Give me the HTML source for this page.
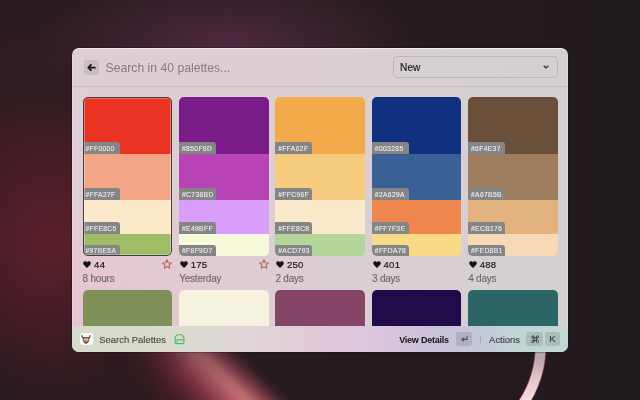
<!DOCTYPE html>
<html><head><meta charset="utf-8">
<style>
*{margin:0;padding:0;box-sizing:border-box}
html,body{width:640px;height:400px;overflow:hidden}
body{position:relative;font-family:"Liberation Sans",sans-serif;background:#201719;-webkit-font-smoothing:antialiased}
.abs{position:absolute}
.bg{position:absolute;left:0;top:0;width:640px;height:400px;
 background:
  radial-gradient(ellipse 195px 80px at 228px 46px, rgba(82,42,64,0.9), rgba(82,42,64,0) 100%),
  radial-gradient(ellipse 130px 150px at 50px 245px, rgba(96,30,44,0.95), rgba(96,30,44,0) 100%),
  radial-gradient(ellipse 220px 190px at 60px 170px, rgba(62,30,35,0.7), rgba(62,30,35,0) 100%),
  radial-gradient(ellipse 160px 80px at 110px 380px, rgba(50,26,30,0.6), rgba(50,26,30,0) 100%),
  linear-gradient(90deg,#281b1f 0%,#251b1e 50%,#211a1e 100%);}
.ray{position:absolute;left:133px;top:260px;width:150px;height:280px;transform:rotate(-46deg);transform-origin:50% 50%;
 background:linear-gradient(90deg, rgba(110,35,50,0) 22%, rgba(125,36,56,0.45) 38%, rgba(158,55,78,0.8) 50%, rgba(188,92,106,0.95) 60%, rgba(204,122,124,1) 68%, rgba(170,72,90,0.65) 77%, rgba(120,40,58,0) 87%);
 -webkit-mask-image:linear-gradient(180deg, rgba(0,0,0,0) 12%, rgba(0,0,0,0.7) 36%, rgba(0,0,0,1) 58%);
 filter:blur(5px)}
.win{will-change:transform;position:absolute;left:72px;top:48px;width:495.5px;height:304px;border-radius:7px;overflow:hidden;
 background:
  radial-gradient(ellipse 250px 180px at 0px 275px, rgba(236,194,208,0.8), rgba(236,194,208,0) 100%),
  linear-gradient(90deg,#ddcfd5 0%,#dccfd4 40%,#d8cfd3 70%,#d4d0d2 100%);
 box-shadow:0 0 0 0.6px rgba(20,10,14,0.6), inset 0 0 0 0.6px rgba(255,255,255,0.45), inset 0 1px 0 rgba(255,255,255,0.55)}
.back{left:12px;top:12px;width:15px;height:15px;border-radius:3px;background:rgba(165,163,165,0.38)}
.search{left:33.6px;top:12px;font-size:12.2px;color:#837b80;line-height:16px;white-space:nowrap}
.dd{left:321px;top:8.2px;width:164.5px;height:22.3px;border:1px solid rgba(120,110,115,0.28);border-radius:4.5px;background:rgba(212,208,210,0.35)}
.ddtext{left:6.1px;top:3.7px;font-size:10.2px;color:#1c1a1b;line-height:14px;-webkit-text-stroke:0.15px #1c1a1b}
.sep{left:0;top:38px;width:100%;height:1px;background:rgba(140,125,132,0.22)}
.card{position:absolute;top:49.25px;width:89.5px;height:159px;border-radius:5px;overflow:hidden}
.selb{position:absolute;left:0;top:0;width:100%;height:100%;border:1.8px solid #403e3f;border-radius:5px;box-shadow:inset 0 0 0 0.8px rgba(255,255,255,0.4)}
.band{position:absolute;left:0;width:100%}
.lab{position:absolute;left:0;bottom:0;width:37px;height:11.5px;background:#858586;border-top-right-radius:3px;
 font-family:"Liberation Sans",sans-serif;font-size:6.7px;color:#f0f0f0;line-height:11.5px;padding:0.6px 0 0 2.9px;letter-spacing:0.38px;white-space:nowrap;-webkit-text-stroke:0.1px #f0f0f0}
.meta{position:absolute;white-space:nowrap}
.cnt{top:210.8px;font-size:9.6px;color:#1a1819;line-height:12px;letter-spacing:0.25px;-webkit-text-stroke:0.2px #1a1819}
.time{top:225.2px;font-size:10px;color:#6a6468;line-height:12px;letter-spacing:-0.22px;-webkit-text-stroke:0.12px #6a6468}
.footer{left:0;top:278px;width:100%;height:26px;
 background:linear-gradient(90deg,#d6dccb 0%,#d8dbcb 15%,#dcdad0 24%,#e0d5d8 36%,#e2c9d8 50%,#dac6dc 62%,#cac2da 72%,#c6c6d9 80%,#c2d5d5 90%,#c0d8d3 100%)}
.kbd{position:absolute;border-radius:3px;background:rgba(100,112,118,0.25)}
</style></head><body>
<div class="bg"></div>
<div class="ray"></div>
<svg class="abs" style="left:0;top:0" width="640" height="400" viewBox="0 0 640 400">
 <defs><linearGradient id="arcg" gradientUnits="userSpaceOnUse" x1="0" y1="350" x2="0" y2="400">
  <stop offset="0" stop-color="#b0a0a6"/><stop offset="0.2" stop-color="#bea8ae"/><stop offset="0.55" stop-color="#dfc3c8"/><stop offset="1" stop-color="#f6dde0"/></linearGradient></defs>
 <path d="M540.6 340 A109 109 0 0 1 518.6 410" fill="none" stroke="#a8505c" stroke-width="11.2"/>
 <path d="M540.6 340 A109 109 0 0 1 518.6 410" fill="none" stroke="url(#arcg)" stroke-width="9.8"/>
</svg>
<div class="win">
  <div class="abs back"><svg width="15" height="15" viewBox="0 0 15 15"><path d="M4.4 7.6H11M6.9 5L4.3 7.6L6.9 10.2" stroke="#1b191a" stroke-width="1.85" fill="none" stroke-linecap="round" stroke-linejoin="round"/></svg></div>
  <div class="abs search">Search in 40 palettes...</div>
  <div class="abs dd"><div class="abs ddtext">New</div>
    <svg class="abs" style="left:149.3px;top:8.2px" width="6" height="4" viewBox="0 0 6 4"><path d="M1 1L3 3L5 1" stroke="#262425" stroke-width="1.1" fill="none" stroke-linecap="round" stroke-linejoin="round"/></svg>
  </div>
  <div class="abs sep"></div>
<div class="card" style="left:10.5px">
<div class="band" style="top:0px;height:56.5px;background:#ea3323"><div class="lab">#FF0000</div></div>
<div class="band" style="top:56.5px;height:46px;background:#f2a686"><div class="lab">#FFA27F</div></div>
<div class="band" style="top:102.5px;height:34.2px;background:#fbe9c9"><div class="lab">#FFE8C5</div></div>
<div class="band" style="top:136.7px;height:22.3px;background:#9fbd67"><div class="lab">#97BE5A</div></div>
<div class="selb"></div>
</div>
<svg class="abs" style="left:11.2px;top:213.0px" width="8" height="7" viewBox="0 0 8 7"><path d="M4 6.9L1 4C-0.2 2.8 0 0.6 1.8 0.2C2.8 0 3.6 0.5 4 1.2C4.4 0.5 5.2 0 6.2 0.2C8 0.6 8.2 2.8 7 4Z" fill="#141213"/></svg>
<div class="meta cnt" style="left:22.1px">44</div>
<div class="meta time" style="left:10.6px">8 hours</div>
<svg class="abs" style="left:90.2px;top:211.3px" width="10" height="10" viewBox="0 0 10 10"><path d="M5.00 0.70L6.29 3.67L9.52 3.98L7.09 6.13L7.79 9.29L5.00 7.65L2.21 9.29L2.91 6.13L0.48 3.98L3.71 3.67Z" fill="none" stroke="#ad6a4e" stroke-width="1.05" stroke-linejoin="round"/></svg>
<div class="card" style="left:10.5px;top:242px;background:#7f9159"></div>
<div class="card" style="left:107.1px">
<div class="band" style="top:0px;height:56.5px;background:#7a1d88"><div class="lab">#850F8D</div></div>
<div class="band" style="top:56.5px;height:46px;background:#b844b7"><div class="lab">#C738BD</div></div>
<div class="band" style="top:102.5px;height:34.2px;background:#d99ef9"><div class="lab">#E49BFF</div></div>
<div class="band" style="top:136.7px;height:22.3px;background:#f8f9da"><div class="lab">#F8F9D7</div></div>
</div>
<svg class="abs" style="left:107.8px;top:213.0px" width="8" height="7" viewBox="0 0 8 7"><path d="M4 6.9L1 4C-0.2 2.8 0 0.6 1.8 0.2C2.8 0 3.6 0.5 4 1.2C4.4 0.5 5.2 0 6.2 0.2C8 0.6 8.2 2.8 7 4Z" fill="#141213"/></svg>
<div class="meta cnt" style="left:118.7px">175</div>
<div class="meta time" style="left:107.2px">Yesterday</div>
<svg class="abs" style="left:186.8px;top:211.3px" width="10" height="10" viewBox="0 0 10 10"><path d="M5.00 0.70L6.29 3.67L9.52 3.98L7.09 6.13L7.79 9.29L5.00 7.65L2.21 9.29L2.91 6.13L0.48 3.98L3.71 3.67Z" fill="none" stroke="#ad6a4e" stroke-width="1.05" stroke-linejoin="round"/></svg>
<div class="card" style="left:107.1px;top:242px;background:#f6f2e0"></div>
<div class="card" style="left:203.3px">
<div class="band" style="top:0px;height:56.5px;background:#f2aa4b"><div class="lab">#FFA62F</div></div>
<div class="band" style="top:56.5px;height:46px;background:#f7cb7d"><div class="lab">#FFC96F</div></div>
<div class="band" style="top:102.5px;height:34.2px;background:#fbe9cc"><div class="lab">#FFE8C8</div></div>
<div class="band" style="top:136.7px;height:22.3px;background:#b5d69a"><div class="lab">#ACD793</div></div>
</div>
<svg class="abs" style="left:204.0px;top:213.0px" width="8" height="7" viewBox="0 0 8 7"><path d="M4 6.9L1 4C-0.2 2.8 0 0.6 1.8 0.2C2.8 0 3.6 0.5 4 1.2C4.4 0.5 5.2 0 6.2 0.2C8 0.6 8.2 2.8 7 4Z" fill="#141213"/></svg>
<div class="meta cnt" style="left:214.9px">250</div>
<div class="meta time" style="left:203.4px">2 days</div>
<div class="card" style="left:203.3px;top:242px;background:#854566"></div>
<div class="card" style="left:299.9px">
<div class="band" style="top:0px;height:56.5px;background:#113180"><div class="lab">#003285</div></div>
<div class="band" style="top:56.5px;height:46px;background:#396196"><div class="lab">#2A629A</div></div>
<div class="band" style="top:102.5px;height:34.2px;background:#ef864e"><div class="lab">#FF7F3E</div></div>
<div class="band" style="top:136.7px;height:22.3px;background:#f9db86"><div class="lab">#FFDA78</div></div>
</div>
<svg class="abs" style="left:300.6px;top:213.0px" width="8" height="7" viewBox="0 0 8 7"><path d="M4 6.9L1 4C-0.2 2.8 0 0.6 1.8 0.2C2.8 0 3.6 0.5 4 1.2C4.4 0.5 5.2 0 6.2 0.2C8 0.6 8.2 2.8 7 4Z" fill="#141213"/></svg>
<div class="meta cnt" style="left:311.5px">401</div>
<div class="meta time" style="left:300.0px">3 days</div>
<div class="card" style="left:299.9px;top:242px;background:#200b4b"></div>
<div class="card" style="left:396.1px">
<div class="band" style="top:0px;height:56.5px;background:#6a4f3a"><div class="lab">#6F4E37</div></div>
<div class="band" style="top:56.5px;height:46px;background:#9f7d60"><div class="lab">#A67B5B</div></div>
<div class="band" style="top:102.5px;height:34.2px;background:#e3b37f"><div class="lab">#ECB176</div></div>
<div class="band" style="top:136.7px;height:22.3px;background:#f8d9b6"><div class="lab">#FED8B1</div></div>
</div>
<svg class="abs" style="left:396.8px;top:213.0px" width="8" height="7" viewBox="0 0 8 7"><path d="M4 6.9L1 4C-0.2 2.8 0 0.6 1.8 0.2C2.8 0 3.6 0.5 4 1.2C4.4 0.5 5.2 0 6.2 0.2C8 0.6 8.2 2.8 7 4Z" fill="#141213"/></svg>
<div class="meta cnt" style="left:407.7px">488</div>
<div class="meta time" style="left:396.2px">4 days</div>
<div class="card" style="left:396.1px;top:242px;background:#2b6566"></div>
  <div class="abs footer">
    <div class="abs" style="left:8.3px;top:6.9px;width:12.4px;height:12px;border-radius:3px;background:#fcfcf9"></div>
    <svg class="abs" style="left:9.4px;top:7.9px" width="10" height="10" viewBox="0 0 10 10">
      <defs><linearGradient id="cow" x1="0" y1="0" x2="0" y2="1"><stop offset="0" stop-color="#4f9a55"/><stop offset="0.28" stop-color="#f0cf5a"/><stop offset="0.58" stop-color="#ee7048"/><stop offset="0.85" stop-color="#8a3f9a"/><stop offset="1" stop-color="#3c4a90"/></linearGradient></defs>
      <path d="M2.5 4Q0.8 3.7 0.9 1.5M7.5 4Q9.2 3.7 9.1 1.5" fill="none" stroke="#3e3e40" stroke-width="1.1" stroke-linecap="round"/>
      <path d="M2.3 3.6H7.7V6.5Q7.7 8.3 5 9.6Q2.3 8.3 2.3 6.5Z" fill="url(#cow)" stroke="#3a3a3c" stroke-width="0.8" stroke-linejoin="round"/>
    </svg>
    <div class="abs" style="left:27.3px;top:8.1px;font-size:9.45px;color:#494548;line-height:12px;white-space:nowrap;-webkit-text-stroke:0.12px #494548">Search Palettes</div>
    <svg class="abs" style="left:101.6px;top:7.8px" width="11" height="11" viewBox="0 0 11 11">
      <path d="M3.1 0.8H7.9L9.9 3.1V8.5Q9.9 9.6 8.8 9.6H2.2Q1.1 9.6 1.1 8.5V3.1Z" fill="none" stroke="#51b766" stroke-width="1.1" stroke-linejoin="round"/>
      <path d="M1.1 5.9H9.9" stroke="#51b766" stroke-width="1.1"/>
      <circle cx="3" cy="7.75" r="0.7" fill="#51b766"/>
    </svg>
    <div class="abs" style="left:327.2px;top:8.3px;font-size:9px;font-weight:bold;color:#161415;line-height:12px;white-space:nowrap;letter-spacing:-0.22px">View Details</div>
    <div class="kbd" style="left:384.2px;top:6.2px;width:15.8px;height:13.5px"></div>
    <svg class="abs" style="left:387px;top:7.9px" width="11" height="10" viewBox="0 0 11 10"><path d="M8 2.2V5.4H3" stroke="#4f4d4e" stroke-width="1.1" fill="none" stroke-linecap="round" stroke-linejoin="round"/><path d="M4.6 3.9L2.9 5.4L4.6 6.9" stroke="#4f4d4e" stroke-width="1.1" fill="none" stroke-linecap="round" stroke-linejoin="round"/></svg>
    <div class="abs" style="left:408.3px;top:9.7px;width:0.8px;height:7px;background:rgba(90,90,95,0.28)"></div>
    <div class="abs" style="left:417.1px;top:8.2px;font-size:9.45px;color:#4a4649;-webkit-text-stroke:0.18px #4a4649;line-height:12px;white-space:nowrap">Actions</div>
    <div class="kbd" style="left:454.3px;top:6.2px;width:16.4px;height:14.1px"></div>
    <svg class="abs" style="left:458.5px;top:9.1px" width="8.4" height="8.4" viewBox="0 0 10 10"><g fill="none" stroke="#454344" stroke-width="1.15"><path d="M2.2 3.5H7.8M2.2 6.5H7.8M3.5 2.2V7.8M6.5 2.2V7.8"/><circle cx="2.2" cy="2.2" r="1.3"/><circle cx="7.8" cy="2.2" r="1.3"/><circle cx="2.2" cy="7.8" r="1.3"/><circle cx="7.8" cy="7.8" r="1.3"/></g></svg>
    <div class="kbd" style="left:473px;top:6.2px;width:14.7px;height:13.5px"></div>
    <div class="abs" style="left:473px;top:6.2px;width:14.7px;height:13.5px;text-align:center;font-size:9.6px;line-height:14px;color:#3c3a3b;-webkit-text-stroke:0.15px #3c3a3b">K</div>
  </div>
</div>
</body></html>
